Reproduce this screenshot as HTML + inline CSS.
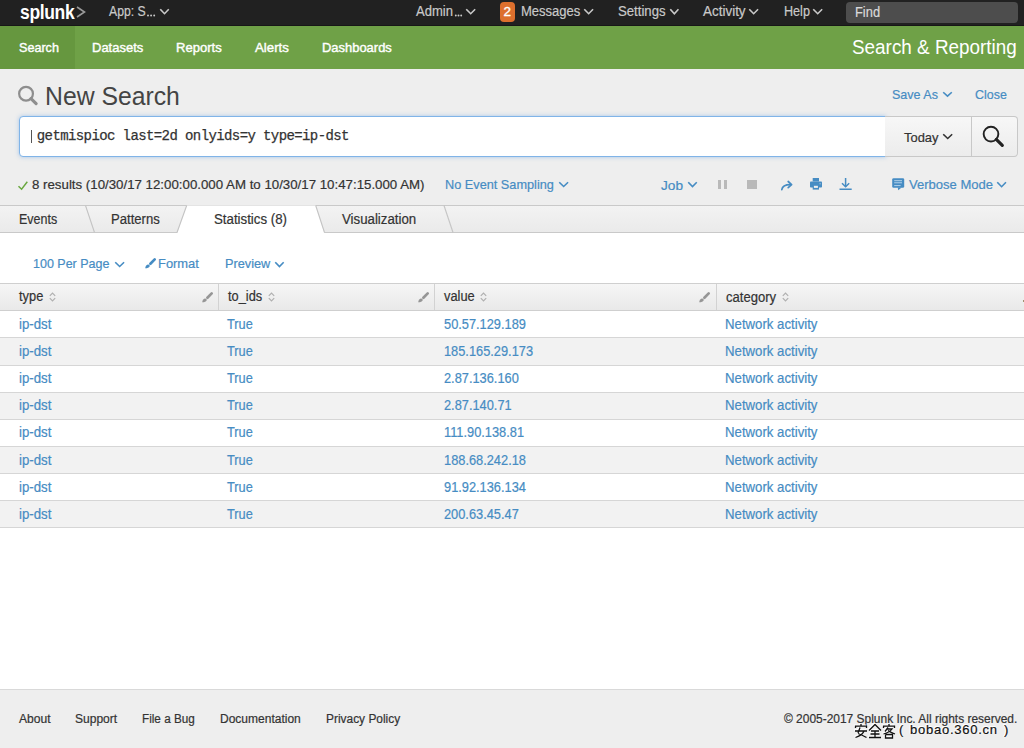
<!DOCTYPE html>
<html><head><meta charset="utf-8">
<style>
*{box-sizing:border-box;margin:0;padding:0}
html,body{width:1024px;height:748px;overflow:hidden;background:#fff;font-family:"Liberation Sans",sans-serif;position:relative}
.a{position:absolute;white-space:nowrap;line-height:1}
svg.a{overflow:visible}
</style></head><body>
<div class="a" style="left:0px;top:0px;width:1024px;height:26px;background:#212121"></div>
<div class="a" style="left:0px;top:25px;width:1024px;height:1px;background:#171717"></div>
<div class="a " style="left:19.5px;top:1.60px;font-size:20px;color:#fff;font-weight:bold;letter-spacing:-0.4px;transform:scaleX(0.875);transform-origin:0 0">splunk</div>
<svg class="a" style="left:76px;top:6px" width="10" height="12"><polyline points="1,1 8.5,6 1,11" fill="none" stroke="#9a9a9a" stroke-width="1.6"/></svg>
<div class="a" style="left:109.0px;top:4.40px;font-size:14px;color:#c9c9c9;transform:scaleX(0.8728);transform-origin:0 0;-webkit-text-stroke:0.2px #c9c9c9;">App: S</div>
<svg class="a" style="left:146px;top:13px" width="12" height="5"><circle cx="2.0" cy="2.5" r="0.95" fill="#c9c9c9"/><circle cx="5.1" cy="2.5" r="0.95" fill="#c9c9c9"/><circle cx="8.2" cy="2.5" r="0.95" fill="#c9c9c9"/></svg>
<svg class="a" style="left:158px;top:7px" width="13" height="9.5"><polyline points="2.8,2.8 6.5,6.7 10.2,2.8" fill="none" stroke="#c9c9c9" stroke-width="1.6" stroke-linecap="square" stroke-linejoin="miter"/></svg>
<div class="a" style="left:416.0px;top:4.30px;font-size:14px;color:#c9c9c9;transform:scaleX(0.9295);transform-origin:0 0;-webkit-text-stroke:0.2px #c9c9c9;">Admin</div>
<svg class="a" style="left:454px;top:13px" width="12" height="5"><circle cx="1.8" cy="2.5" r="0.95" fill="#c9c9c9"/><circle cx="4.5" cy="2.5" r="0.95" fill="#c9c9c9"/><circle cx="7.2" cy="2.5" r="0.95" fill="#c9c9c9"/></svg>
<svg class="a" style="left:464.4px;top:7px" width="13.400000000000034" height="9.5"><polyline points="2.8,2.8 6.700000000000017,6.7 10.600000000000033,2.8" fill="none" stroke="#c9c9c9" stroke-width="1.6" stroke-linecap="square" stroke-linejoin="miter"/></svg>
<div class="a" style="left:499.5px;top:2px;width:15.5px;height:19.7px;background:#dd6f2d;border-radius:4px"></div>
<div class="a " style="left:503.5px;top:5.30px;font-size:13.5px;color:#fff;-webkit-text-stroke:0.35px #fff;">2</div>
<div class="a" style="left:521.25px;top:4.10px;font-size:14px;color:#c9c9c9;transform:scaleX(0.9303);transform-origin:0 0;-webkit-text-stroke:0.2px #c9c9c9;">Messages</div>
<svg class="a" style="left:582.4px;top:7px" width="13.300000000000068" height="9.5"><polyline points="2.8,2.8 6.650000000000034,6.7 10.500000000000068,2.8" fill="none" stroke="#c9c9c9" stroke-width="1.6" stroke-linecap="square" stroke-linejoin="miter"/></svg>
<div class="a" style="left:618.0px;top:4.10px;font-size:14px;color:#c9c9c9;transform:scaleX(0.9407);transform-origin:0 0;-webkit-text-stroke:0.2px #c9c9c9;">Settings</div>
<svg class="a" style="left:667.7px;top:7px" width="12.699999999999932" height="9.5"><polyline points="2.8,2.8 6.349999999999966,6.7 9.899999999999931,2.8" fill="none" stroke="#c9c9c9" stroke-width="1.6" stroke-linecap="square" stroke-linejoin="miter"/></svg>
<div class="a" style="left:703.0px;top:4.10px;font-size:14px;color:#c9c9c9;transform:scaleX(0.9605);transform-origin:0 0;-webkit-text-stroke:0.2px #c9c9c9;">Activity</div>
<svg class="a" style="left:747.4px;top:7px" width="13.300000000000068" height="9.5"><polyline points="2.8,2.8 6.650000000000034,6.7 10.500000000000068,2.8" fill="none" stroke="#c9c9c9" stroke-width="1.6" stroke-linecap="square" stroke-linejoin="miter"/></svg>
<div class="a" style="left:783.75px;top:4.10px;font-size:14px;color:#c9c9c9;transform:scaleX(0.9010);transform-origin:0 0;-webkit-text-stroke:0.2px #c9c9c9;">Help</div>
<svg class="a" style="left:811.4px;top:7px" width="13.399999999999977" height="9.5"><polyline points="2.8,2.8 6.699999999999989,6.7 10.599999999999977,2.8" fill="none" stroke="#c9c9c9" stroke-width="1.6" stroke-linecap="square" stroke-linejoin="miter"/></svg>
<div class="a" style="left:846px;top:2px;width:171.5px;height:21px;background:#4d4d4d;border-radius:4px"></div>
<div class="a" style="left:855.0px;top:5.40px;font-size:14.1px;color:#d9d9d9;transform:scaleX(0.9144);transform-origin:0 0;-webkit-text-stroke:0.2px #d9d9d9;">Find</div>
<div class="a" style="left:0px;top:26px;width:1024px;height:43px;background:#6fa147"></div>
<div class="a" style="left:0px;top:26px;width:75px;height:43px;background:#66973f"></div>
<div class="a" style="left:18.5px;top:40.70px;font-size:13.2px;color:#fff;transform:scaleX(0.9558);transform-origin:0 0;-webkit-text-stroke:0.4px #fff;">Search</div>
<div class="a" style="left:92.0px;top:40.70px;font-size:13.2px;color:#fff;transform:scaleX(0.9846);transform-origin:0 0;-webkit-text-stroke:0.4px #fff;">Datasets</div>
<div class="a" style="left:176.0px;top:40.70px;font-size:13.2px;color:#fff;transform:scaleX(0.9903);transform-origin:0 0;-webkit-text-stroke:0.4px #fff;">Reports</div>
<div class="a" style="left:254.8px;top:40.70px;font-size:13.2px;color:#fff;transform:scaleX(1.0044);transform-origin:0 0;-webkit-text-stroke:0.4px #fff;">Alerts</div>
<div class="a" style="left:322.0px;top:40.70px;font-size:13.2px;color:#fff;transform:scaleX(0.9817);transform-origin:0 0;-webkit-text-stroke:0.4px #fff;">Dashboards</div>
<div class="a" style="left:852.2px;top:37.30px;font-size:20.1px;color:#fff;transform:scaleX(0.9396);transform-origin:0 0;">Search &amp; Reporting</div>
<div class="a" style="left:0px;top:69px;width:1024px;height:136px;background:#eeeeee"></div>
<svg class="a" style="left:16px;top:85px" width="24" height="22"><circle cx="10.05" cy="8.75" r="6.9" fill="none" stroke="#8e8e8e" stroke-width="2.2"/><line x1="15" y1="13.7" x2="20.1" y2="18.6" stroke="#8e8e8e" stroke-width="3.2" stroke-linecap="round"/></svg>
<div class="a" style="left:44.9px;top:83.10px;font-size:26.4px;color:#444;transform:scaleX(0.9381);transform-origin:0 0;">New Search</div>
<div class="a" style="left:892.0px;top:87.60px;font-size:13.3px;color:#468cc3;transform:scaleX(0.9426);transform-origin:0 0;-webkit-text-stroke:0.2px #468cc3;">Save As</div>
<svg class="a" style="left:941px;top:90px" width="13" height="9"><polyline points="2.8,2.8 6.5,6.2 10.2,2.8" fill="none" stroke="#468cc3" stroke-width="1.6" stroke-linecap="square" stroke-linejoin="miter"/></svg>
<div class="a" style="left:974.5px;top:87.60px;font-size:13.3px;color:#468cc3;transform:scaleX(0.9353);transform-origin:0 0;-webkit-text-stroke:0.2px #468cc3;">Close</div>
<div class="a" style="left:18.5px;top:116.3px;width:867px;height:40.3px;background:#fff;border:1px solid #80b4e8;border-radius:4px 0 0 4px;box-shadow:0 0 4px rgba(100,160,230,.5)"></div>
<div class="a" style="left:31px;top:129.6px;width:1.2px;height:13.4px;background:#555"></div>
<div class="a" style="left:36.8px;top:129px;font-family:'Liberation Mono',monospace;font-size:14px;letter-spacing:-0.6px;color:#333;-webkit-text-stroke:0.25px #333">getmispioc last=2d onlyids=y type=ip-dst</div>
<div class="a" style="left:885px;top:116.3px;width:132.5px;height:40.3px;background:linear-gradient(#f7f7f7,#ececec);border:1px solid #c8c8c8;border-left:none;border-radius:0 4px 4px 0"></div>
<div class="a" style="left:971px;top:116.3px;width:1px;height:40.3px;background:#c8c8c8"></div>
<div class="a" style="left:904.0px;top:131.00px;font-size:13.3px;color:#333;transform:scaleX(0.9718);transform-origin:0 0;-webkit-text-stroke:0.2px #333;">Today</div>
<svg class="a" style="left:941px;top:132.2px" width="13.399999999999977" height="9.300000000000011"><polyline points="2.8,2.8 6.699999999999989,6.5000000000000115 10.599999999999977,2.8" fill="none" stroke="#333" stroke-width="1.6" stroke-linecap="square" stroke-linejoin="miter"/></svg>
<svg class="a" style="left:980px;top:124px" width="26" height="25"><circle cx="11" cy="10.1" r="7.35" fill="none" stroke="#222" stroke-width="1.9"/><line x1="16.3" y1="15.4" x2="22.3" y2="21.4" stroke="#222" stroke-width="3.2" stroke-linecap="round"/></svg>
<svg class="a" style="left:17px;top:179.5px" width="12" height="11"><polyline points="1.5,6.2 4.6,9.2 10.3,1.8" fill="none" stroke="#6aa840" stroke-width="1.5"/></svg>
<div class="a" style="left:31.5px;top:178.00px;font-size:13.0px;color:#333;transform:scaleX(1.0208);transform-origin:0 0;-webkit-text-stroke:0.2px #333;">8 results (10/30/17 12:00:00.000 AM to 10/30/17 10:47:15.000 AM)</div>
<div class="a" style="left:445.0px;top:177.80px;font-size:13.3px;color:#468cc3;transform:scaleX(0.9565);transform-origin:0 0;-webkit-text-stroke:0.2px #468cc3;">No Event Sampling</div>
<svg class="a" style="left:557px;top:179.8px" width="13.299999999999955" height="9.299999999999983"><polyline points="2.8,2.8 6.649999999999977,6.499999999999983 10.499999999999954,2.8" fill="none" stroke="#468cc3" stroke-width="1.6" stroke-linecap="square" stroke-linejoin="miter"/></svg>
<div class="a" style="left:661.0px;top:178.50px;font-size:13.3px;color:#468cc3;transform:scaleX(1.0256);transform-origin:0 0;-webkit-text-stroke:0.2px #468cc3;">Job</div>
<svg class="a" style="left:686px;top:180px" width="13" height="9.300000000000011"><polyline points="2.8,2.8 6.5,6.5000000000000115 10.2,2.8" fill="none" stroke="#468cc3" stroke-width="1.6" stroke-linecap="square" stroke-linejoin="miter"/></svg>
<div class="a" style="left:718px;top:180px;width:3px;height:9px;background:#b9b9b9"></div>
<div class="a" style="left:724px;top:180px;width:3px;height:9px;background:#b9b9b9"></div>
<div class="a" style="left:746.6px;top:180px;width:10px;height:9px;background:#b9b9b9"></div>
<svg class="a" style="left:780px;top:180px" width="14" height="11"><path d="M1.8 9.6 C2.2 6.6 4.5 4.6 10.5 4.6" fill="none" stroke="#468cc3" stroke-width="1.7" stroke-linecap="round"/><polyline points="8.2,1.5 11.6,4.6 8.2,7.7" fill="none" stroke="#468cc3" stroke-width="1.7" stroke-linecap="round" stroke-linejoin="round"/></svg>
<svg class="a" style="left:809px;top:178px" width="14" height="12"><rect x="3.7" y="0" width="6.3" height="3.5" fill="#468cc3"/><rect x="1" y="3.6" width="12" height="6" rx="0.8" fill="#468cc3"/><rect x="3.7" y="7" width="6.3" height="4.6" fill="#468cc3"/><rect x="4.9" y="7.8" width="4" height="2.1" fill="#eee"/><rect x="10.6" y="5" width="1" height="1.4" fill="#9cc3e3"/></svg>
<svg class="a" style="left:838.5px;top:178px" width="14" height="12"><path d="M6.6 0 V9" stroke="#468cc3" stroke-width="1.5"/><polyline points="3,5.2 6.6,8.8 10.2,5.2" fill="none" stroke="#468cc3" stroke-width="1.5"/><rect x="0.5" y="10.5" width="12.2" height="1.5" fill="#468cc3"/></svg>
<svg class="a" style="left:891.5px;top:177.8px" width="13" height="13"><rect x="0.2" y="0.2" width="12" height="9.6" rx="1.4" fill="#468cc3"/><path d="M5.8 9.5 L6.2 12.2 L9.6 9.5Z" fill="#468cc3"/><rect x="2.2" y="2.1" width="7.8" height="1.1" fill="#a8cbe6"/><rect x="2.2" y="4.2" width="7.8" height="1.1" fill="#a8cbe6"/><rect x="2.2" y="7" width="6.4" height="1.1" fill="#a8cbe6"/></svg>
<div class="a" style="left:908.6px;top:177.50px;font-size:13.3px;color:#468cc3;transform:scaleX(0.9808);transform-origin:0 0;-webkit-text-stroke:0.2px #468cc3;">Verbose Mode</div>
<svg class="a" style="left:995.2px;top:179.6px" width="13.199999999999932" height="9.5"><polyline points="2.8,2.8 6.599999999999966,6.7 10.399999999999931,2.8" fill="none" stroke="#468cc3" stroke-width="1.6" stroke-linecap="square" stroke-linejoin="miter"/></svg>
<div class="a" style="left:0px;top:205px;width:1024px;height:28px;background:linear-gradient(#f3f3f3,#eaeaea)"></div>
<div class="a" style="left:0px;top:205px;width:1024px;height:1px;background:#c9c9c9"></div>
<div class="a" style="left:0px;top:232px;width:1024px;height:1px;background:#c9c9c9"></div>
<svg class="a" style="left:0;top:205px" width="1024" height="29"><path d="M85.5 0.5 L94.5 27.5" stroke="#c4c4c4" stroke-width="1.1" fill="none"/><path d="M177 28.5 L186.7 0.5 L315.7 0.5 L324.5 28.5 Z" fill="#fff"/><path d="M177 27.5 L186.7 0.5 M315.7 0.5 L324.5 27.5" stroke="#c4c4c4" stroke-width="1.1" fill="none"/><path d="M444 0.5 L453 27.5" stroke="#c4c4c4" stroke-width="1.1" fill="none"/></svg>
<div class="a" style="left:0px;top:233px;width:1024px;height:50px;background:#fff"></div>
<div class="a" style="left:18.8px;top:212.80px;font-size:13.8px;color:#333;transform:scaleX(0.9052);transform-origin:0 0;-webkit-text-stroke:0.2px #333;">Events</div>
<div class="a" style="left:111.0px;top:212.80px;font-size:13.8px;color:#333;transform:scaleX(0.9494);transform-origin:0 0;-webkit-text-stroke:0.2px #333;">Patterns</div>
<div class="a" style="left:214.0px;top:212.80px;font-size:13.8px;color:#333;transform:scaleX(0.9618);transform-origin:0 0;-webkit-text-stroke:0.2px #333;">Statistics (8)</div>
<div class="a" style="left:341.5px;top:212.80px;font-size:13.8px;color:#333;transform:scaleX(0.9605);transform-origin:0 0;-webkit-text-stroke:0.2px #333;">Visualization</div>
<div class="a" style="left:33.4px;top:257.00px;font-size:13.4px;color:#468cc3;transform:scaleX(0.9335);transform-origin:0 0;-webkit-text-stroke:0.2px #468cc3;">100 Per Page</div>
<svg class="a" style="left:112.6px;top:259.5px" width="13.300000000000011" height="9.300000000000011"><polyline points="2.8,2.8 6.650000000000006,6.5000000000000115 10.50000000000001,2.8" fill="none" stroke="#468cc3" stroke-width="1.6" stroke-linecap="square" stroke-linejoin="miter"/></svg>
<svg class="a" style="left:145.3px;top:258px" width="12" height="11"><line x1="9.7" y1="1.4" x2="5.4" y2="5.7" stroke="#468cc3" stroke-width="2.7" stroke-linecap="round"/><path d="M0.2 10.2 C0.4 8.2 1.2 6.7 2.9 6.4 C4.2 6.3 5 7.2 4.6 8.4 C4 9.7 2.1 10.3 0.2 10.2Z" fill="#468cc3"/></svg>
<div class="a" style="left:158.1px;top:257.00px;font-size:13.4px;color:#468cc3;transform:scaleX(0.9635);transform-origin:0 0;-webkit-text-stroke:0.2px #468cc3;">Format</div>
<div class="a" style="left:224.8px;top:257.00px;font-size:13.4px;color:#468cc3;transform:scaleX(0.9508);transform-origin:0 0;-webkit-text-stroke:0.2px #468cc3;">Preview</div>
<svg class="a" style="left:273px;top:259.5px" width="12.899999999999977" height="9.300000000000011"><polyline points="2.8,2.8 6.449999999999989,6.5000000000000115 10.099999999999977,2.8" fill="none" stroke="#468cc3" stroke-width="1.6" stroke-linecap="square" stroke-linejoin="miter"/></svg>
<div class="a" style="left:0px;top:283px;width:1024px;height:28px;background:linear-gradient(#f6f6f6,#e8e8e8)"></div>
<div class="a" style="left:0px;top:283px;width:1024px;height:1px;background:#cfcfcf"></div>
<div class="a" style="left:0px;top:310px;width:1024px;height:1px;background:#cfcfcf"></div>
<div class="a" style="left:218.0px;top:284px;width:1px;height:26px;background:#d2d2d2"></div>
<div class="a" style="left:434.2px;top:284px;width:1px;height:26px;background:#d2d2d2"></div>
<div class="a" style="left:715.7px;top:284px;width:1px;height:26px;background:#d2d2d2"></div>
<div class="a" style="left:18.7px;top:290.30px;font-size:13.8px;color:#333;transform:scaleX(0.9310);transform-origin:0 0;-webkit-text-stroke:0.2px #333;">type</div>
<svg class="a" style="left:48.6px;top:292px" width="7" height="10"><polyline points="0.8,3.8 3.5,1 6.2,3.8" fill="none" stroke="#b0b0b0" stroke-width="1.2"/><polyline points="0.8,6.2 3.5,9 6.2,6.2" fill="none" stroke="#b0b0b0" stroke-width="1.2"/></svg>
<svg class="a" style="left:201.5px;top:291.5px" width="12" height="11"><line x1="9.7" y1="1.4" x2="5.4" y2="5.7" stroke="#969696" stroke-width="2.7" stroke-linecap="round"/><path d="M0.2 10.2 C0.4 8.2 1.2 6.7 2.9 6.4 C4.2 6.3 5 7.2 4.6 8.4 C4 9.7 2.1 10.3 0.2 10.2Z" fill="#969696"/></svg>
<div class="a" style="left:228.2px;top:290.30px;font-size:13.8px;color:#333;transform:scaleX(0.9281);transform-origin:0 0;-webkit-text-stroke:0.2px #333;">to_ids</div>
<div class="a" style="left:444.2px;top:290.30px;font-size:13.8px;color:#333;transform:scaleX(0.9303);transform-origin:0 0;-webkit-text-stroke:0.2px #333;">value</div>
<div class="a" style="left:725.8px;top:290.90px;font-size:13.8px;color:#333;transform:scaleX(0.9462);transform-origin:0 0;-webkit-text-stroke:0.2px #333;">category</div>
<svg class="a" style="left:781.6px;top:292px" width="7" height="10"><polyline points="0.8,3.8 3.5,1 6.2,3.8" fill="none" stroke="#b0b0b0" stroke-width="1.2"/><polyline points="0.8,6.2 3.5,9 6.2,6.2" fill="none" stroke="#b0b0b0" stroke-width="1.2"/></svg>
<svg class="a" style="left:417.5px;top:291.5px" width="12" height="11"><line x1="9.7" y1="1.4" x2="5.4" y2="5.7" stroke="#969696" stroke-width="2.7" stroke-linecap="round"/><path d="M0.2 10.2 C0.4 8.2 1.2 6.7 2.9 6.4 C4.2 6.3 5 7.2 4.6 8.4 C4 9.7 2.1 10.3 0.2 10.2Z" fill="#969696"/></svg>
<svg class="a" style="left:698.5px;top:291.5px" width="12" height="11"><line x1="9.7" y1="1.4" x2="5.4" y2="5.7" stroke="#969696" stroke-width="2.7" stroke-linecap="round"/><path d="M0.2 10.2 C0.4 8.2 1.2 6.7 2.9 6.4 C4.2 6.3 5 7.2 4.6 8.4 C4 9.7 2.1 10.3 0.2 10.2Z" fill="#969696"/></svg>
<div class="a" style="left:1023px;top:300px;width:1px;height:2px;background:#a09070"></div>
<svg class="a" style="left:268.4px;top:292px" width="7" height="10"><polyline points="0.8,3.8 3.5,1 6.2,3.8" fill="none" stroke="#b0b0b0" stroke-width="1.2"/><polyline points="0.8,6.2 3.5,9 6.2,6.2" fill="none" stroke="#b0b0b0" stroke-width="1.2"/></svg>
<svg class="a" style="left:480.3px;top:292px" width="7" height="10"><polyline points="0.8,3.8 3.5,1 6.2,3.8" fill="none" stroke="#b0b0b0" stroke-width="1.2"/><polyline points="0.8,6.2 3.5,9 6.2,6.2" fill="none" stroke="#b0b0b0" stroke-width="1.2"/></svg>
<div class="a" style="left:0px;top:311px;width:1024px;height:26px;background:#ffffff"></div>
<div class="a" style="left:0px;top:337px;width:1024px;height:1px;background:#d6d6d6"></div>
<div class="a" style="left:18.7px;top:316.70px;font-size:14.2px;color:#468cc3;transform:scaleX(0.9337);transform-origin:0 0;-webkit-text-stroke:0.2px #468cc3;">ip-dst</div>
<div class="a" style="left:227.0px;top:316.70px;font-size:14.2px;color:#468cc3;transform:scaleX(0.9005);transform-origin:0 0;-webkit-text-stroke:0.2px #468cc3;">True</div>
<div class="a" style="left:444.2px;top:316.70px;font-size:14.2px;color:#468cc3;transform:scaleX(0.9031);transform-origin:0 0;-webkit-text-stroke:0.2px #468cc3;">50.57.129.189</div>
<div class="a" style="left:725.3px;top:316.70px;font-size:14.2px;color:#468cc3;transform:scaleX(0.9306);transform-origin:0 0;-webkit-text-stroke:0.2px #468cc3;">Network activity</div>
<div class="a" style="left:0px;top:338px;width:1024px;height:27px;background:#f2f2f2"></div>
<div class="a" style="left:0px;top:365px;width:1024px;height:1px;background:#d6d6d6"></div>
<div class="a" style="left:18.7px;top:343.87px;font-size:14.2px;color:#468cc3;transform:scaleX(0.9337);transform-origin:0 0;-webkit-text-stroke:0.2px #468cc3;">ip-dst</div>
<div class="a" style="left:227.0px;top:343.87px;font-size:14.2px;color:#468cc3;transform:scaleX(0.9005);transform-origin:0 0;-webkit-text-stroke:0.2px #468cc3;">True</div>
<div class="a" style="left:444.2px;top:343.87px;font-size:14.2px;color:#468cc3;transform:scaleX(0.9027);transform-origin:0 0;-webkit-text-stroke:0.2px #468cc3;">185.165.29.173</div>
<div class="a" style="left:725.3px;top:343.87px;font-size:14.2px;color:#468cc3;transform:scaleX(0.9306);transform-origin:0 0;-webkit-text-stroke:0.2px #468cc3;">Network activity</div>
<div class="a" style="left:0px;top:366px;width:1024px;height:26px;background:#ffffff"></div>
<div class="a" style="left:0px;top:392px;width:1024px;height:1px;background:#d6d6d6"></div>
<div class="a" style="left:18.7px;top:371.04px;font-size:14.2px;color:#468cc3;transform:scaleX(0.9337);transform-origin:0 0;-webkit-text-stroke:0.2px #468cc3;">ip-dst</div>
<div class="a" style="left:227.0px;top:371.04px;font-size:14.2px;color:#468cc3;transform:scaleX(0.9005);transform-origin:0 0;-webkit-text-stroke:0.2px #468cc3;">True</div>
<div class="a" style="left:444.2px;top:371.04px;font-size:14.2px;color:#468cc3;transform:scaleX(0.9029);transform-origin:0 0;-webkit-text-stroke:0.2px #468cc3;">2.87.136.160</div>
<div class="a" style="left:725.3px;top:371.04px;font-size:14.2px;color:#468cc3;transform:scaleX(0.9306);transform-origin:0 0;-webkit-text-stroke:0.2px #468cc3;">Network activity</div>
<div class="a" style="left:0px;top:393px;width:1024px;height:26px;background:#f2f2f2"></div>
<div class="a" style="left:0px;top:419px;width:1024px;height:1px;background:#d6d6d6"></div>
<div class="a" style="left:18.7px;top:398.21px;font-size:14.2px;color:#468cc3;transform:scaleX(0.9337);transform-origin:0 0;-webkit-text-stroke:0.2px #468cc3;">ip-dst</div>
<div class="a" style="left:227.0px;top:398.21px;font-size:14.2px;color:#468cc3;transform:scaleX(0.9005);transform-origin:0 0;-webkit-text-stroke:0.2px #468cc3;">True</div>
<div class="a" style="left:444.2px;top:398.21px;font-size:14.2px;color:#468cc3;transform:scaleX(0.9027);transform-origin:0 0;-webkit-text-stroke:0.2px #468cc3;">2.87.140.71</div>
<div class="a" style="left:725.3px;top:398.21px;font-size:14.2px;color:#468cc3;transform:scaleX(0.9306);transform-origin:0 0;-webkit-text-stroke:0.2px #468cc3;">Network activity</div>
<div class="a" style="left:0px;top:420px;width:1024px;height:26px;background:#ffffff"></div>
<div class="a" style="left:0px;top:446px;width:1024px;height:1px;background:#d6d6d6"></div>
<div class="a" style="left:18.7px;top:425.39px;font-size:14.2px;color:#468cc3;transform:scaleX(0.9337);transform-origin:0 0;-webkit-text-stroke:0.2px #468cc3;">ip-dst</div>
<div class="a" style="left:227.0px;top:425.39px;font-size:14.2px;color:#468cc3;transform:scaleX(0.9005);transform-origin:0 0;-webkit-text-stroke:0.2px #468cc3;">True</div>
<div class="a" style="left:444.2px;top:425.39px;font-size:14.2px;color:#468cc3;transform:scaleX(0.9028);transform-origin:0 0;-webkit-text-stroke:0.2px #468cc3;">111.90.138.81</div>
<div class="a" style="left:725.3px;top:425.39px;font-size:14.2px;color:#468cc3;transform:scaleX(0.9306);transform-origin:0 0;-webkit-text-stroke:0.2px #468cc3;">Network activity</div>
<div class="a" style="left:0px;top:447px;width:1024px;height:26px;background:#f2f2f2"></div>
<div class="a" style="left:0px;top:473px;width:1024px;height:1px;background:#d6d6d6"></div>
<div class="a" style="left:18.7px;top:452.56px;font-size:14.2px;color:#468cc3;transform:scaleX(0.9337);transform-origin:0 0;-webkit-text-stroke:0.2px #468cc3;">ip-dst</div>
<div class="a" style="left:227.0px;top:452.56px;font-size:14.2px;color:#468cc3;transform:scaleX(0.9005);transform-origin:0 0;-webkit-text-stroke:0.2px #468cc3;">True</div>
<div class="a" style="left:444.2px;top:452.56px;font-size:14.2px;color:#468cc3;transform:scaleX(0.9031);transform-origin:0 0;-webkit-text-stroke:0.2px #468cc3;">188.68.242.18</div>
<div class="a" style="left:725.3px;top:452.56px;font-size:14.2px;color:#468cc3;transform:scaleX(0.9306);transform-origin:0 0;-webkit-text-stroke:0.2px #468cc3;">Network activity</div>
<div class="a" style="left:0px;top:474px;width:1024px;height:26px;background:#ffffff"></div>
<div class="a" style="left:0px;top:500px;width:1024px;height:1px;background:#d6d6d6"></div>
<div class="a" style="left:18.7px;top:479.73px;font-size:14.2px;color:#468cc3;transform:scaleX(0.9337);transform-origin:0 0;-webkit-text-stroke:0.2px #468cc3;">ip-dst</div>
<div class="a" style="left:227.0px;top:479.73px;font-size:14.2px;color:#468cc3;transform:scaleX(0.9005);transform-origin:0 0;-webkit-text-stroke:0.2px #468cc3;">True</div>
<div class="a" style="left:444.2px;top:479.73px;font-size:14.2px;color:#468cc3;transform:scaleX(0.9031);transform-origin:0 0;-webkit-text-stroke:0.2px #468cc3;">91.92.136.134</div>
<div class="a" style="left:725.3px;top:479.73px;font-size:14.2px;color:#468cc3;transform:scaleX(0.9306);transform-origin:0 0;-webkit-text-stroke:0.2px #468cc3;">Network activity</div>
<div class="a" style="left:0px;top:501px;width:1024px;height:26px;background:#f2f2f2"></div>
<div class="a" style="left:0px;top:527px;width:1024px;height:1px;background:#d6d6d6"></div>
<div class="a" style="left:18.7px;top:506.90px;font-size:14.2px;color:#468cc3;transform:scaleX(0.9337);transform-origin:0 0;-webkit-text-stroke:0.2px #468cc3;">ip-dst</div>
<div class="a" style="left:227.0px;top:506.90px;font-size:14.2px;color:#468cc3;transform:scaleX(0.9005);transform-origin:0 0;-webkit-text-stroke:0.2px #468cc3;">True</div>
<div class="a" style="left:444.2px;top:506.90px;font-size:14.2px;color:#468cc3;transform:scaleX(0.9029);transform-origin:0 0;-webkit-text-stroke:0.2px #468cc3;">200.63.45.47</div>
<div class="a" style="left:725.3px;top:506.90px;font-size:14.2px;color:#468cc3;transform:scaleX(0.9306);transform-origin:0 0;-webkit-text-stroke:0.2px #468cc3;">Network activity</div>
<div class="a" style="left:0px;top:689px;width:1024px;height:59px;background:#eeeeee"></div>
<div class="a" style="left:0px;top:689px;width:1024px;height:1px;background:#d9d9d9"></div>
<div class="a" style="left:18.6px;top:712.80px;font-size:12.3px;color:#333;transform:scaleX(0.9829);transform-origin:0 0;-webkit-text-stroke:0.2px #333;">About</div>
<div class="a" style="left:75.2px;top:712.80px;font-size:12.3px;color:#333;transform:scaleX(0.9791);transform-origin:0 0;-webkit-text-stroke:0.2px #333;">Support</div>
<div class="a" style="left:142.0px;top:712.80px;font-size:12.3px;color:#333;transform:scaleX(0.9531);transform-origin:0 0;-webkit-text-stroke:0.2px #333;">File a Bug</div>
<div class="a" style="left:220.2px;top:712.80px;font-size:12.3px;color:#333;transform:scaleX(0.9764);transform-origin:0 0;-webkit-text-stroke:0.2px #333;">Documentation</div>
<div class="a" style="left:326.4px;top:712.80px;font-size:12.3px;color:#333;transform:scaleX(0.9693);transform-origin:0 0;-webkit-text-stroke:0.2px #333;">Privacy Policy</div>
<div class="a" style="left:783.6px;top:712.80px;font-size:12.3px;color:#333;transform:scaleX(0.9715);transform-origin:0 0;-webkit-text-stroke:0.2px #333;">&copy; 2005-2017 Splunk Inc. All rights reserved.</div>
<div class="a " style="left:899px;top:722.60px;font-size:13px;color:#111;-webkit-text-stroke:0.2px #111;text-shadow:-1px -1px 0 #fff,0 -1px 0 #fff,-1px 0 0 #fff">(</div>
<div class="a " style="left:910px;top:722.60px;font-size:13px;color:#111;-webkit-text-stroke:0.2px #111;text-shadow:-1px -1px 0 #fff,0 -1px 0 #fff,-1px 0 0 #fff;letter-spacing:0.75px">bobao.360.cn</div>
<div class="a " style="left:1004px;top:722.60px;font-size:13px;color:#111;-webkit-text-stroke:0.2px #111;text-shadow:-1px -1px 0 #fff,0 -1px 0 #fff,-1px 0 0 #fff">)</div>
<svg class="a" style="left:852.5px;top:722px" width="46" height="17" fill="none" stroke="#fff" stroke-width="1.4"><path d="M7 1 V3 M1.5 5 V3.2 H12.5 V5 M6 4.5 L4 10 M1 8 H13 M10 8 C9 11 6 13 1.5 14.5 M4 10.5 C7 11.5 10 13 12.5 14.5"/><path d="M21 1.5 L15 7.5 M21 1.5 L27 7.5 M17 8 H25 M16.5 11 H25.5 M21 8 V14.5 M15 14.5 H27"/><path d="M35 1 V3 M29.5 5 V3.2 H40.5 V5 M34 4.5 L31 8.5 M33 6 H38 C36 9 33 10 29.5 11 M34 7.5 C36 9 38 10 41 11 M31.5 11.5 V15 H38.5 V11.5 H31.5"/></svg>
<svg class="a" style="left:853.5px;top:723px" width="46" height="17" fill="none" stroke="#111" stroke-width="1.3"><path d="M7 1 V3 M1.5 5 V3.2 H12.5 V5 M6 4.5 L4 10 M1 8 H13 M10 8 C9 11 6 13 1.5 14.5 M4 10.5 C7 11.5 10 13 12.5 14.5"/><path d="M21 1.5 L15 7.5 M21 1.5 L27 7.5 M17 8 H25 M16.5 11 H25.5 M21 8 V14.5 M15 14.5 H27"/><path d="M35 1 V3 M29.5 5 V3.2 H40.5 V5 M34 4.5 L31 8.5 M33 6 H38 C36 9 33 10 29.5 11 M34 7.5 C36 9 38 10 41 11 M31.5 11.5 V15 H38.5 V11.5 H31.5"/></svg>
</body></html>
